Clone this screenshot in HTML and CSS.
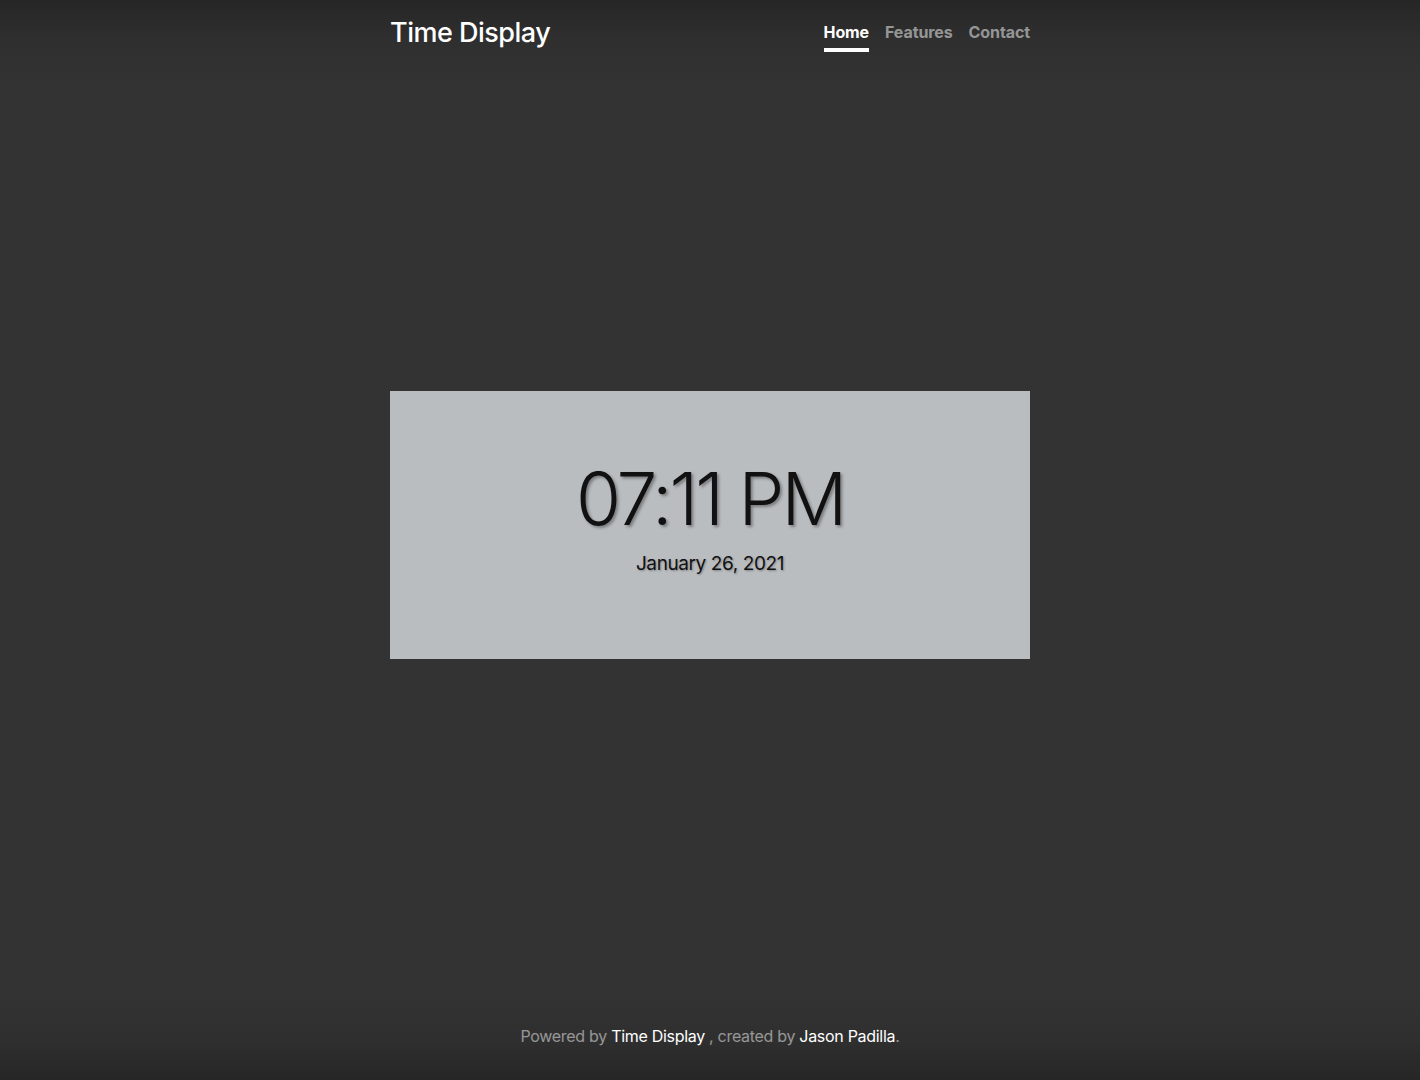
FILE: index.html
```html
<!DOCTYPE html>
<html lang="en">
<head>
<meta charset="utf-8">
<title>Time Display</title>
<link rel="stylesheet" href="styles.css">
</head>
<body>
<div class="cover">
  <header class="masthead">
    <h3 class="brand">Time Display</h3>
    <nav class="nav">
      <a class="nav-link active" href="#">Home</a>
      <a class="nav-link" href="#">Features</a>
      <a class="nav-link" href="#">Contact</a>
    </nav>
  </header>
  <main class="main">
    <div class="clock">
      <div class="time">07:11 PM</div>
      <div class="date">January 26, 2021</div>
    </div>
  </main>
  <footer class="footer">
    <p>Powered by <a href="#">Time Display</a> , created by <a href="#">Jason Padilla</a>.</p>
  </footer>
</div>
</body>
</html>
```
FILE: styles.css
```css
html, body {
  height: 100%;
  margin: 0;
}
body {
  background: linear-gradient(to bottom, #262626 0px, #2f2f2f 40px, #333 90px, #333 calc(100% - 90px), #2f2f2f calc(100% - 40px), #262626 100%);
  color: #fff;
  font-family: Inter, "Noto Sans", sans-serif;
  font-size: 16px;
  line-height: 1.5;
}
.cover {
  width: 640px;
  margin: 0 auto;
  padding: 16px 0;
  height: 100%;
  box-sizing: border-box;
  display: flex;
  flex-direction: column;
}
.masthead {
  display: flex;
  justify-content: space-between;
  align-items: flex-start;
  margin-bottom: auto;
}
.brand {
  margin: 0;
  font-size: 27px;
  font-weight: 500;
  line-height: 34px;
  letter-spacing: -0.5px;
}
.nav {
  display: flex;
  gap: 16px;
}
.nav-link {
  padding: 4px 0;
  font-weight: 700;
  font-size: 16px;
  line-height: 24px;
  color: rgba(255,255,255,.5);
  text-decoration: none;
  border-bottom: 4px solid transparent;
  letter-spacing: -0.1px;
}
.nav-link.active {
  color: #fff;
  border-bottom-color: #fff;
}
.main {
  padding-bottom: 26px;
}
.clock {
  background: #babdc0;
  height: 268px;
  box-sizing: border-box;
  padding-top: 60px;
  display: flex;
  flex-direction: column;
  align-items: center;
  color: #111;
}
.time {
  font-size: 73px;
  font-weight: 300;
  line-height: 96px;
  letter-spacing: -3px;
  text-shadow: 2px 2px 3px rgba(0,0,0,.35);
}
.date {
  margin-top: 3px;
  font-size: 19px;
  line-height: 28px;
  font-weight: 400;
  letter-spacing: -0.4px;
  text-shadow: 1px 1px 2px rgba(0,0,0,.3);
}
.footer {
  margin-top: auto;
  text-align: center;
  color: rgba(255,255,255,.5);
}
.footer p {
  margin: 0 0 16px;
  letter-spacing: -0.3px;
}
.footer a {
  color: #fff;
  text-decoration: none;
}
```
